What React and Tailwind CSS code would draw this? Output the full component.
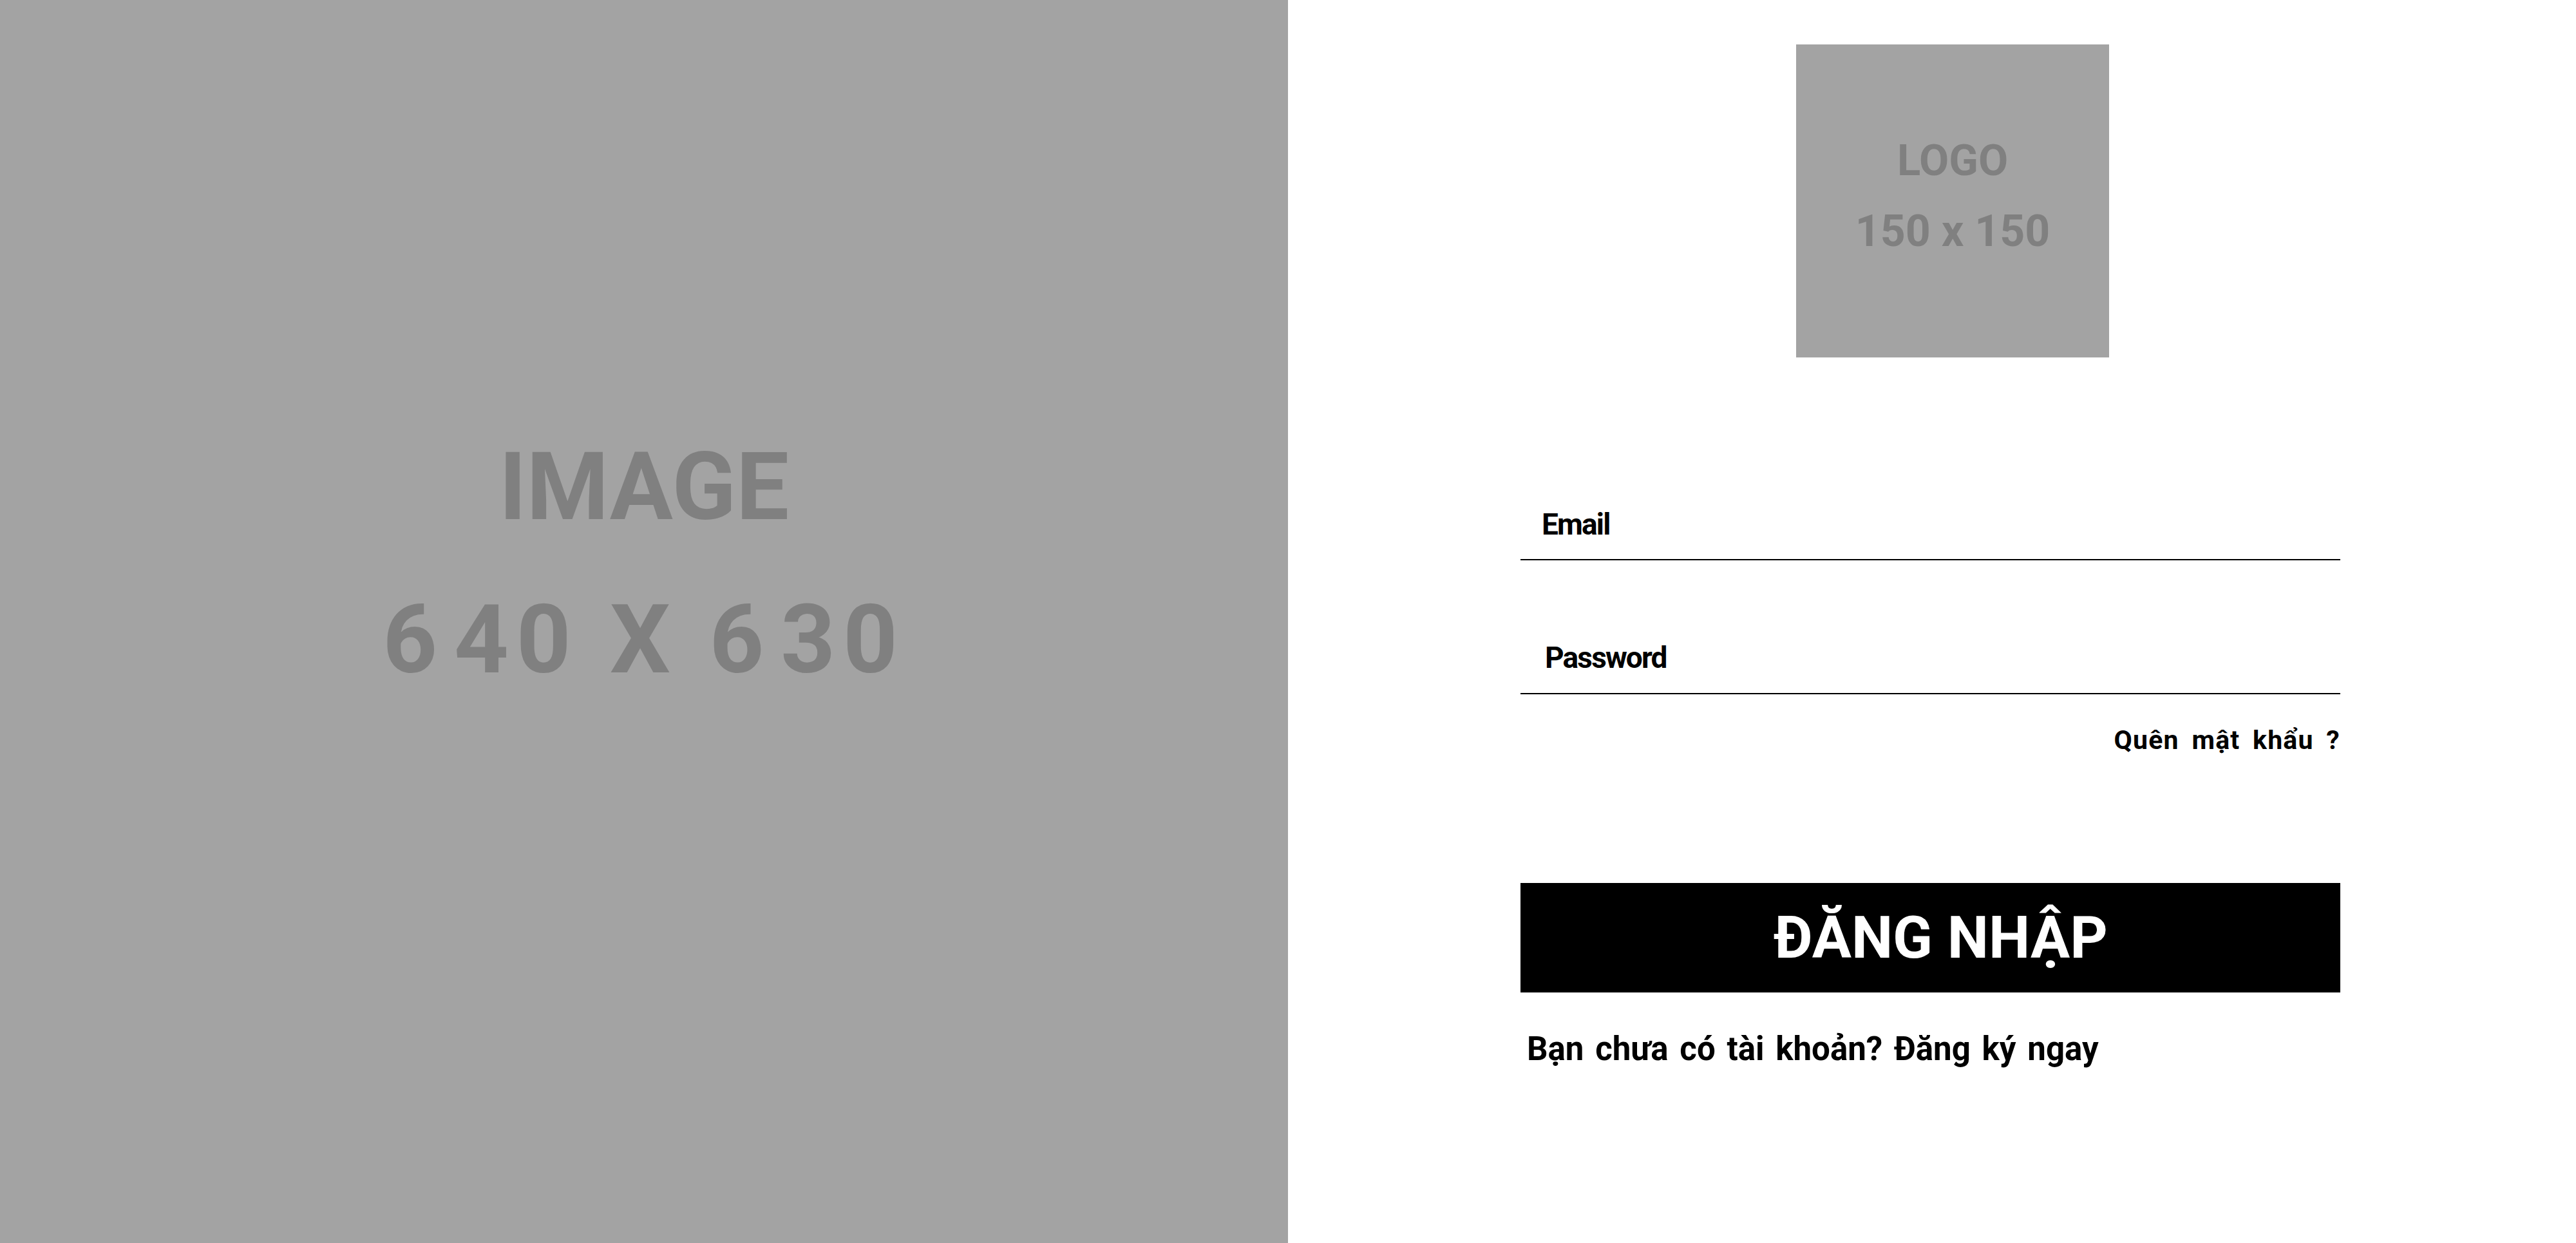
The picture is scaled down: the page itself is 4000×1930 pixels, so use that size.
const Field = ({ label, className }) => {
  return (
    <div className={`border-b-2 border-black ${className}`}>
      <div className="text-[46px] leading-none font-bold tracking-[-0.04em] text-black">
        {label}
      </div>
    </div>
  );
};

const App = () => {
  return (
    <div className="flex w-full h-[1930px] font-[family-name:Roboto,sans-serif] bg-white">
      {/* Image placeholder */}
      <div className="w-[2000px] shrink-0 bg-[#a3a3a3] flex flex-col items-center pt-[684px] text-[#808080] font-bold">
        <div className="text-[146px] leading-none">IMAGE</div>
        <div className="mt-[90px] text-[148px] leading-none tracking-[0.08em]">
          <span className="mr-[14px]">6</span>40 X <span className="mr-[14px]">6</span>30
        </div>
      </div>

      {/* Login form */}
      <div className="flex-1 flex flex-col pt-[69px] pl-[361px]">
        <div className="w-[1273px] flex flex-col">
          <div className="ml-[428px] w-[486px] h-[486px] bg-[#a3a3a3] flex flex-col items-center pt-[147px] text-[#808080] font-bold">
            <div className="text-[67px] leading-none">LOGO</div>
            <div className="mt-[42px] text-[68px] leading-none">150 x 150</div>
          </div>

          <Field label="Email" className="mt-[236px] pl-[33px] pb-[31px]" />
          <Field label="Password" className="mt-[128px] pl-[38px] pb-[32px]" />

          <a className="mt-[51px] self-end text-[41px] leading-none font-bold text-black tracking-[0.03em] [word-spacing:0.2em]">
            Quên mật khẩu ?
          </a>

          <button className="mt-[201px] h-[170px] w-full bg-black text-white flex items-center justify-center pl-[32px]">
            <span className="text-[91px] leading-none font-bold">ĐĂNG NHẬP</span>
          </button>

          <div className="mt-[62px] pl-[10px] text-[51px] leading-none font-bold text-black [word-spacing:0.1em]">
            Bạn chưa có tài khoản? Đăng ký ngay
          </div>
        </div>
      </div>
    </div>
  );
};

export default App;
